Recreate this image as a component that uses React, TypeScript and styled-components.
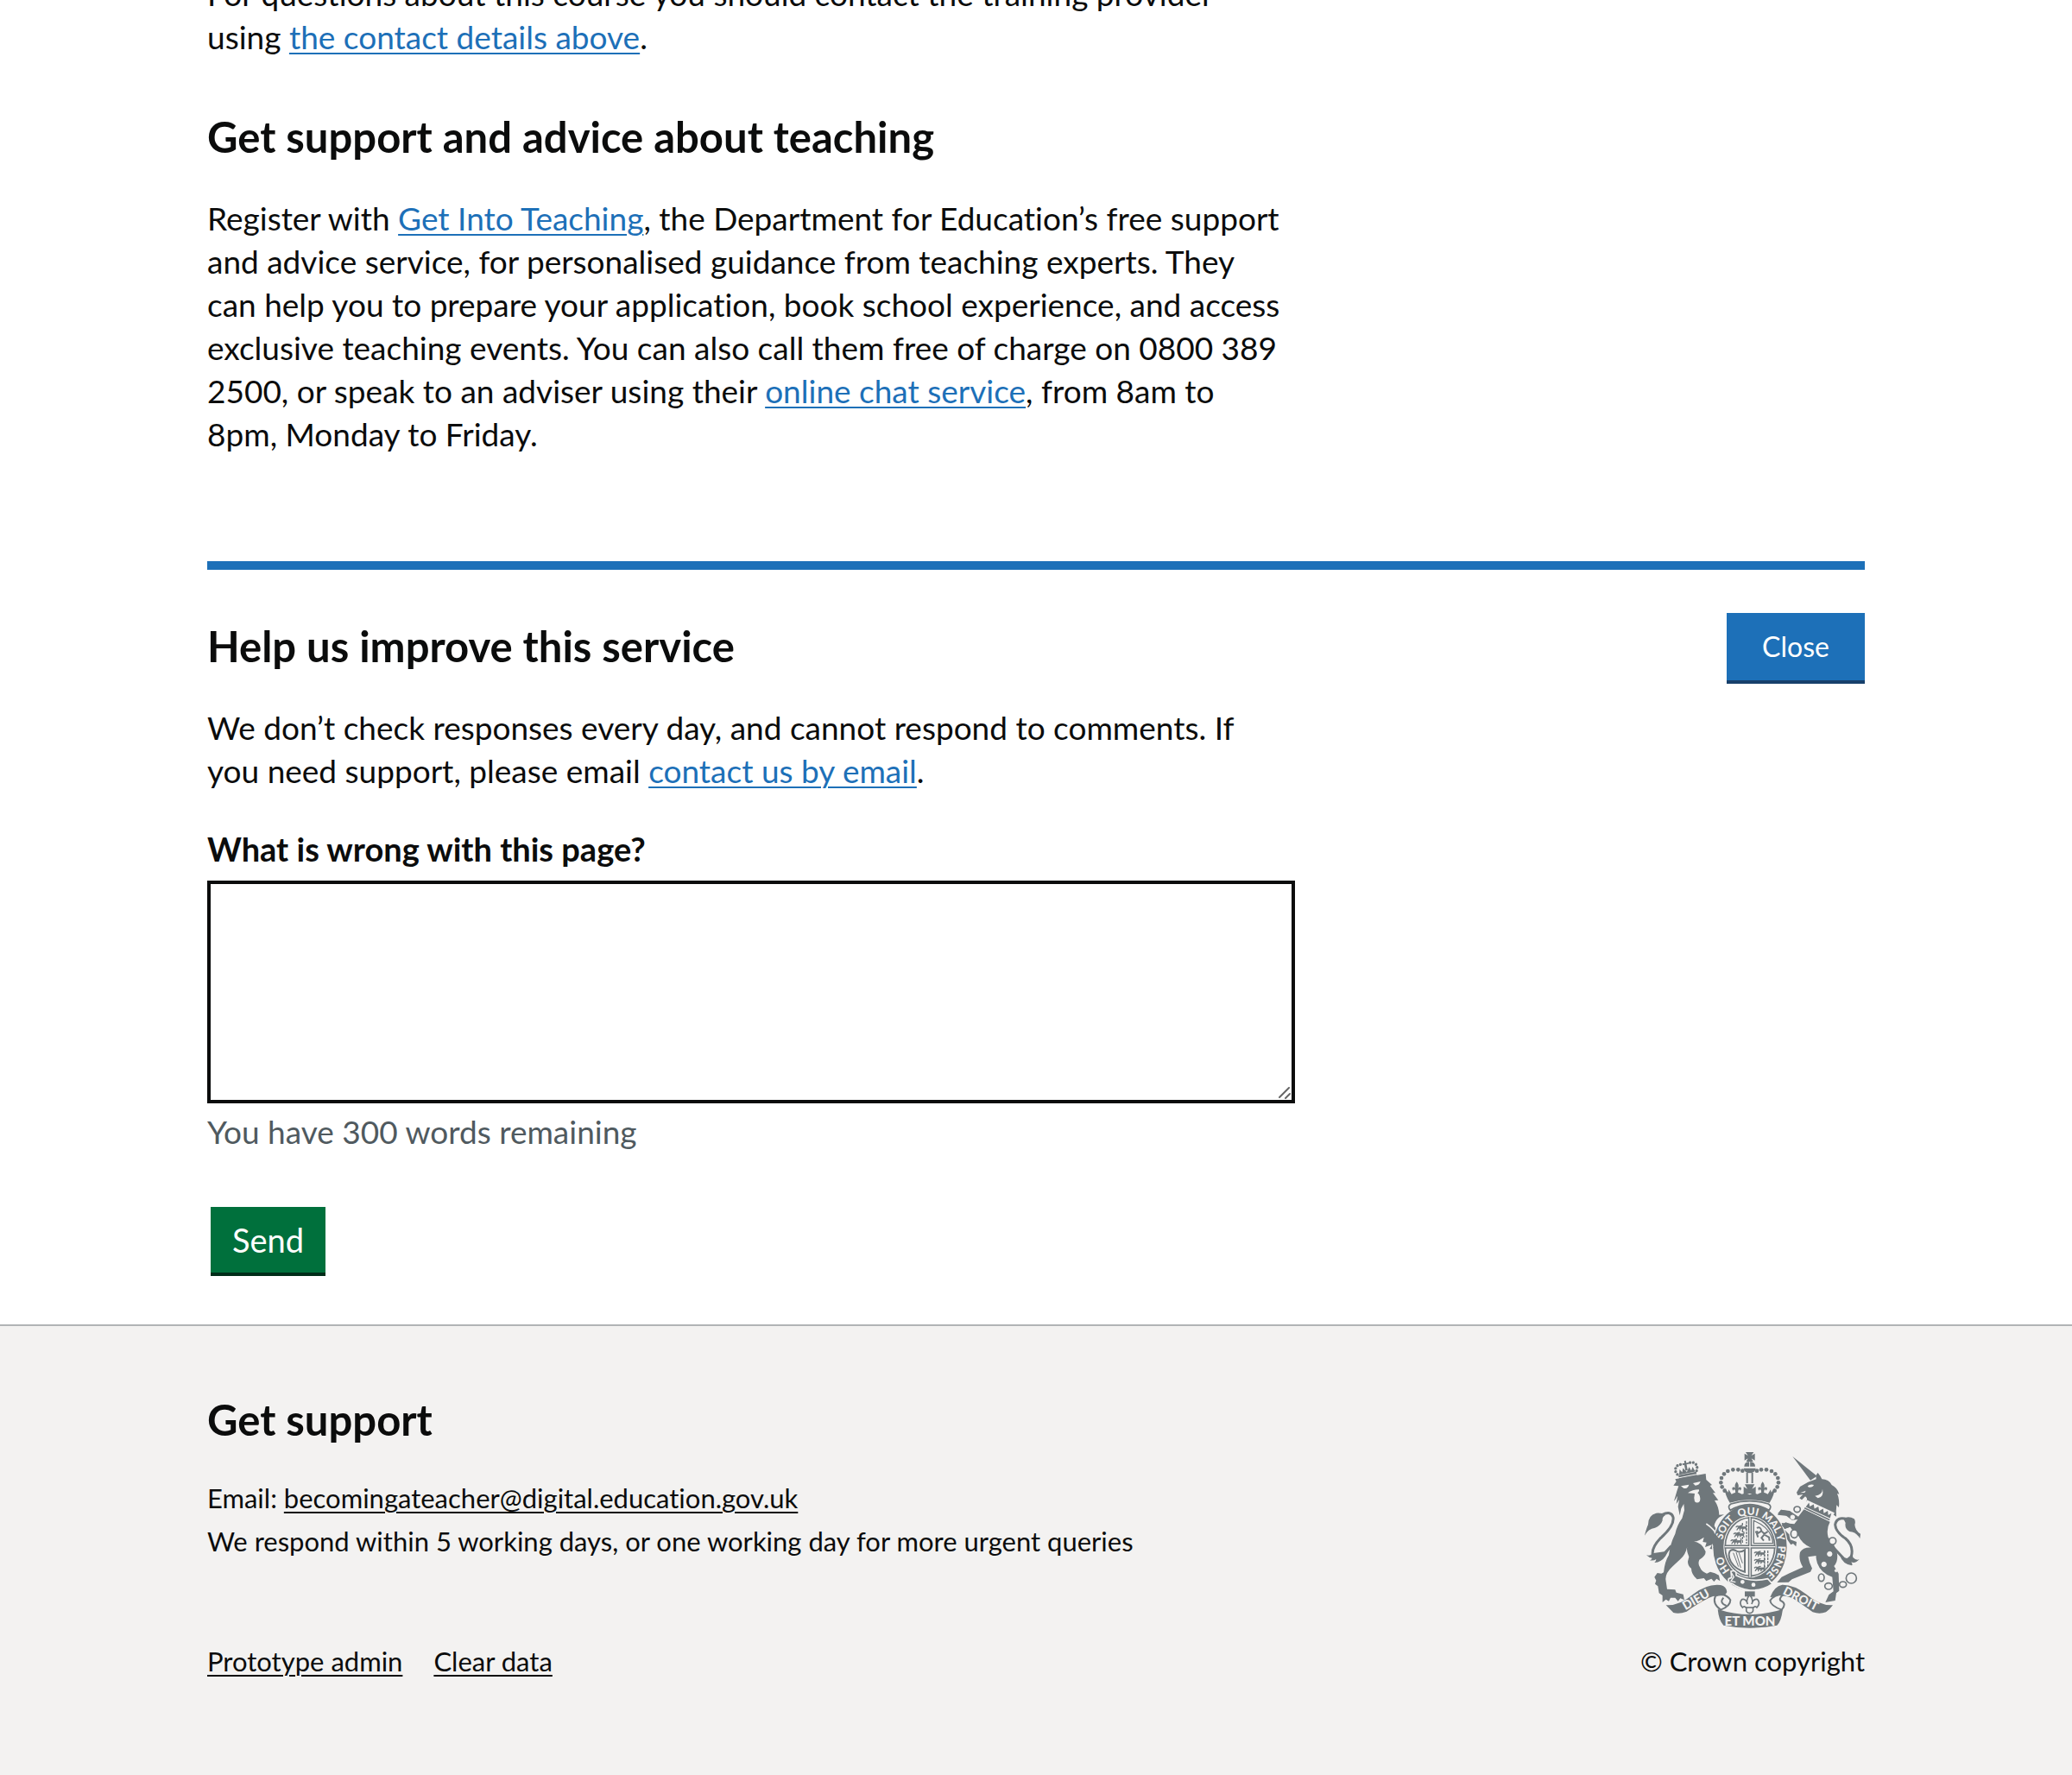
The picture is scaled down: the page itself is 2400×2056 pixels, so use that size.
import React from "react";
import styled, { createGlobalStyle } from "styled-components";

const ink = "#0b0c0c";
const blue = "#1d70b8";

const GlobalStyle = createGlobalStyle`
  *, *::before, *::after { box-sizing: border-box; }
  body {
    margin: 0;
    background: #ffffff;
    color: ${ink};
    font-family: Lato, "Liberation Sans", sans-serif;
    font-size: 37px;
    line-height: 50px;
    font-variant-ligatures: none;
  }
`;

const Page = styled.div`
  display: flex;
  flex-direction: column;
  min-height: 100vh;
  overflow: hidden;
`;

const Container = styled.div`
  width: 80%;
  margin: 0 auto;
`;

const Main = styled(Container).attrs({ as: "main" })`
  margin-top: -32px;
  padding-bottom: 56px;
`;

const Column = styled.div`
  max-width: 1260px;
`;

const Heading = styled.h2<{ $gap?: number }>`
  margin: 0 0 ${(p) => p.$gap ?? 40}px;
  font-size: 49px;
  line-height: 60px;
  font-weight: 700;
`;

const Paragraph = styled.p<{ $gap?: number }>`
  margin: 0 0 ${(p) => p.$gap ?? 40}px;
`;

const Link = styled.a<{ $muted?: boolean }>`
  color: ${(p) => (p.$muted ? ink : blue)};
  text-decoration: underline;
  text-decoration-thickness: 2px;
  text-underline-offset: 4px;
`;

const Feedback = styled.section`
  border-top: 10px solid ${blue};
  padding-top: 50px;
`;

const FeedbackHeader = styled.div`
  display: flex;
  justify-content: space-between;
  align-items: flex-start;
  margin-bottom: 26px;
`;

const FeedbackTitle = styled(Heading)`
  margin: 8px 0 0;
`;

const Button = styled.button<{ $tone: "blue" | "green" }>`
  display: block;
  border: 0;
  padding: 0 24px;
  height: ${(p) => (p.$tone === "blue" ? 78 : 76)}px;
  min-width: ${(p) => (p.$tone === "blue" ? 160 : 133)}px;
  margin: ${(p) => (p.$tone === "blue" ? "0 0 4px" : "0 4px 4px")};
  background: ${(p) => (p.$tone === "blue" ? blue : "#00703c")};
  box-shadow: 0 4px 0 ${(p) => (p.$tone === "blue" ? "#17406b" : "#002d18")};
  color: #ffffff;
  font: inherit;
  font-size: ${(p) => (p.$tone === "blue" ? 32 : 38)}px;
  cursor: pointer;
`;

const Form = styled.form`
  margin: 0;
`;

const Label = styled.label`
  display: block;
  margin-bottom: 12px;
  font-size: 38px;
  font-weight: 700;
`;

const TextArea = styled.textarea`
  display: block;
  width: 100%;
  height: 258px;
  margin: 0 0 8px;
  padding: 10px;
  border: 4px solid ${ink};
  border-radius: 0;
  background: #ffffff;
  color: ${ink};
  font: inherit;
  resize: vertical;

  &::-webkit-resizer {
    background: url("data:image/svg+xml,%3Csvg xmlns='http://www.w3.org/2000/svg' width='15' height='15'%3E%3Cpath d='M1 12 L12 1 M8 13 L13 8' stroke='%23666' stroke-width='2' stroke-linecap='round'/%3E%3C/svg%3E") no-repeat;
  }
`;

const Hint = styled.div`
  margin-bottom: 62px;
  color: #505a5f;
`;

const Footer = styled.footer`
  flex: 1;
  border-top: 2px solid #b1b4b6;
  background: #f3f2f1;
  padding: 78px 0 112px;
  font-size: 31px;
`;

const FooterRow = styled(Container)`
  display: flex;
  justify-content: space-between;
  align-items: flex-end;
`;

const FooterLinks = styled.nav`
  display: flex;
  gap: 36px;
  line-height: 40px;
`;

const Copyright = styled.a`
  display: flex;
  flex-direction: column;
  align-items: center;
  gap: 18px;
  color: ${ink};
  line-height: 40px;
  text-decoration: none;
`;

const CrestSvg = styled.svg`
  display: block;
  width: 250px;
  height: 204px;
`;

const G = "#6f777b";
const P = "#f3f2f1";

const crownDots = [
  [412, 131], [397, 127], [379, 127], [361, 132], [348, 142], [339, 156], [337, 172], [341, 187], [350, 200],
];

const PassantLion = ({ x, y }: { x: number; y: number }) => (
  <g transform={`translate(${x} ${y})`} fill="none" stroke={G} strokeWidth="4" strokeLinecap="round">
    <path d="M2 4 Q8 -2 12 5 L32 5 Q40 5 36 -3 M10 6 L5 14 M17 6 L15 15 M28 6 L24 14 M34 6 L37 15 M13 2 L22 -1" />
    <path d="M12 7 H34" strokeWidth="7" />
  </g>
);

const Fleur = ({ x, y }: { x: number; y: number }) => (
  <path
    transform={`translate(${x} ${y})`}
    fill={G}
    d="M0 -21 Q11 -8 4 3 Q7 -5 14 -2 Q19 4 11 10 Q12 4 6 7 Q4 12 5 20 H-5 Q-4 12 -6 7 Q-12 4 -11 10 Q-19 4 -14 -2 Q-7 -5 -4 3 Q-11 -8 0 -21Z"
  />
);

const Crest = () => (
  <CrestSvg viewBox="72 66 750 612" aria-hidden="true">
    {/* supporters: lion */}
    <g fill={G}>
      <path d="M72 356 Q78 330 84 318 Q84 285 112 278 Q132 276 144 285 Q132 292 134 304 Q128 322 108 329 Q84 332 72 356Z" />
      <path
        d="M132 284 Q164 268 171 292 Q176 322 126 366 Q96 398 100 422 Q112 440 136 424 L164 392"
        fill="none" stroke={G} strokeWidth="9"
      />
      <path d="M98 418 Q94 428 78 424 Q88 434 98 434 Q96 440 90 442 Q104 444 112 438 Q112 446 106 450 Q130 448 144 428 L162 396 L140 412Z" />
      <path d="M172 182 L182 168 L178 160 L284 141 L286 162 L306 180 L299 183 L318 208 L309 208 L328 233 L315 234 Q330 256 331 284 L348 283 L330 293 Q316 306 314 322 Q326 340 332 366 Q344 384 342 402 L350 414 L342 430 L334 416 L326 434 L318 420 L310 424 L314 404 L298 402 L306 388 L282 396 L287 380 L274 378 L278 362 L262 372 Q248 378 240 376 Q272 380 284 412 Q284 428 262 440 Q256 454 264 466 Q270 482 288 488 L300 482 L316 487 L330 494 L334 514 L322 506 L313 516 L304 506 L286 514 L278 504 L254 508 Q234 490 234 470 Q222 462 222 446 L226 430 Q216 408 220 394 Q214 424 196 438 L168 464 Q144 486 145 508 L150 542 L178 544 L182 554 L206 560 L210 580 L196 574 L188 584 L178 572 L162 572 L156 584 L146 578 L134 588 L134 564 L122 556 L118 532 L108 524 L112 512 L106 500 L116 486 L130 488 L138 484 Q142 446 156 424 Q160 386 178 350 Q184 320 202 296 L210 268 L208 246 L199 262 L194 286 L188 256 L192 232 L182 246 L186 218 L178 232 L174 236 L184 202 L190 184Z" />
      <g transform="rotate(-11 215 132)">
        <rect x="187" y="141" width="63" height="8" />
        <rect x="187" y="152" width="63" height="4" />
        {[184, 180, 182, 190, 201].map((x, i) => (
          <g key={x}>
            <circle cx={x} cy={[138, 127, 116, 108, 106][i]} r="5" />
            <circle cx={436 - x} cy={[138, 127, 116, 108, 106][i]} r="5" />
          </g>
        ))}
        <path d="M190 140 L195 122 L202 134 L207 120 L218 136 L229 120 L234 134 L241 122 L247 140Z" />
        <path d="M216 96 H222 V104 H230 V110 H222 V130 H214 V110 H208 V104 H216Z" />
      </g>
    </g>
    <g fill={P}>
      <path d="M198 184 L226 179 Q222 194 208 192Z M240 174 L266 168 Q262 182 248 182Z" />
      <path d="M222 208 Q238 196 260 196 Q264 200 256 208 Q268 218 264 236 Q256 246 246 238 Q242 224 246 210Z" />
    </g>
    <path d="M286 315 Q312 332 328 360" fill="none" stroke={P} strokeWidth="5" />

    {/* supporters: unicorn */}
    <g fill={G}>
      <path d="M586 81 L671 149 L648 164Z" />
      <path d="M600 206 L612 186 L640 170 L668 160 Q666 144 674 138 Q684 150 688 160 Q712 160 722 180 Q742 190 748 212 L741 210 Q750 232 747 258 L739 250 Q736 272 738 290 L720 278 L634 238 Q640 226 630 220 L618 232 L610 226 L622 213 L604 216Z" />
      <path d="M626 264 L716 308 Q702 334 710 362 Q732 384 740 414 Q746 444 730 462 L746 488 L748 548 L738 556 L734 582 L700 588 L712 562 L728 550 L724 500 Q684 486 672 452 Q666 432 668 426 L640 430 Q644 452 654 470 L648 482 L584 508 L572 518 L532 519 L548 500 L572 488 L622 466 Q606 440 612 414 Q624 396 650 398 Q618 384 606 356 Q584 338 578 326 L556 334 L574 352 L578 370 L600 378 L598 394 L588 384 L580 388 L562 362 L544 330 L548 312 L592 316 L604 300 L584 302 L560 284 L534 280 L546 266 L576 270 L606 290Z" />
      <path d="M762 296 Q782 286 800 298 Q806 306 802 318 Q804 340 822 350 L820 366 Q806 342 784 342 Q766 332 770 312Z" />
      <path
        d="M776 300 Q740 288 734 318 Q736 344 770 366 Q800 392 790 428 Q784 446 764 436 L730 400"
        fill="none" stroke={G} strokeWidth="9"
      />
      <path d="M794 420 L796 432 Q808 444 818 438 Q804 454 790 448 Q796 458 792 460 Q760 456 750 424 L772 438Z" />
    </g>
    <path d="M638 184 Q648 176 660 180 Q656 190 642 188Z M664 218 Q690 214 690 194 Q696 222 674 226Z M612 208 L632 200 L628 207Z" fill={P} />
    <g transform="rotate(25 674 275)">
      <rect x="622" y="252" width="105" height="34" fill={P} />
      <path d="M626 279 H722 V284 H626Z M628 276 L632 258 L640 269 L649 256 L658 269 L667 256 L676 269 L685 256 L694 269 L703 256 L711 269 L718 258 L721 276Z" fill={G} />
    </g>
    <g fill={P} stroke={P} strokeWidth="3">
      <circle cx="586" cy="292" r="7" />
      <circle cx="715" cy="420" r="8" />
      <circle cx="695" cy="456" r="8" />
      <circle cx="737" cy="478" r="4" />
    </g>
    <g fill={P} stroke={G} strokeWidth="5">
      <ellipse cx="602" cy="265" rx="11" ry="10" />
      <ellipse cx="592" cy="350" rx="12" ry="14" />
      <ellipse cx="725" cy="375" rx="12" ry="12" />
      <ellipse cx="686" cy="502" rx="10" ry="13" />
      <ellipse cx="711" cy="532" rx="13" ry="11" />
      <ellipse cx="761" cy="526" rx="12" ry="10" />
      <circle cx="790" cy="504" r="18" />
    </g>

    {/* garter and shield */}
    <ellipse cx="438" cy="397" rx="132" ry="151" fill={P} />
    <ellipse cx="438" cy="397" rx="128" ry="148" fill={G} />
    <ellipse cx="438" cy="395" rx="92" ry="107" fill={P} />
    <ellipse cx="438" cy="395" rx="86" ry="101" fill="none" stroke={G} strokeWidth="5" />
    <path d="M438 292 V500 M350 395 H526" stroke={G} strokeWidth="13" />
    <path d="M438 292 V500 M350 395 H526" stroke={P} strokeWidth="4" />
    <PassantLion x={388} y={322} />
    <PassantLion x={380} y={346} />
    <PassantLion x={370} y={370} />
    <PassantLion x={452} y={412} />
    <PassantLion x={452} y={438} />
    <PassantLion x={452} y={464} />
    <path d="M412 312 V384 M426 306 V384 M500 408 V464 M488 408 V478" stroke={G} strokeWidth="4" strokeDasharray="9 3" />
    <g fill="none" stroke={G} strokeWidth="4">
      <path d="M451 304 V383 H518 Q514 330 451 304Z" />
      <path d="M368 410 Q360 424 372 448 Q388 474 420 482 V406 Q402 418 388 408 Q376 402 368 410Z" strokeWidth="6" />
      <path d="M380 416 L398 464 M390 414 L406 468 M400 416 L412 452" strokeWidth="3" />
      <path d="M462 330 Q474 322 478 340 L488 350 L500 342 M478 340 L462 350 L466 362 M488 352 L478 364 L486 374 M490 354 L504 362 L506 374 M466 342 L456 344" strokeWidth="6" />
    </g>
    <defs>
      <path id="motto" d="M340 397 A98 113 0 0 1 438 284 A98 113 0 0 1 536 397 A98 113 0 0 1 438 510 A98 113 0 0 1 340 397" />
    </defs>
    <g fill={P} fontFamily="Lato, sans-serif" fontWeight="900" fontSize="36">
      <text><textPath href="#motto" startOffset="26">SOIT</textPath></text>
      <text><textPath href="#motto" startOffset="126">QUI</textPath></text>
      <text><textPath href="#motto" startOffset="205">MAL</textPath></text>
      <text><textPath href="#motto" startOffset="287">Y</textPath></text>
      <text><textPath href="#motto" startOffset="326">PENSE</textPath></text>
      <text><textPath href="#motto" startOffset="576">HO</textPath></text>
    </g>
    <path d="M372 480 Q392 474 390 494 Q440 520 500 506 L516 524 Q480 548 438 546 Q396 540 378 524 Q360 520 364 506 L374 502Z" fill={G} stroke={P} strokeWidth="5" />
    <path d="M374 486 L382 500 L372 514 L388 518" fill="none" stroke={P} strokeWidth="4" />
    <circle cx="412" cy="517" r="7" fill={P} />
    <circle cx="450" cy="527" r="7" fill={P} />
    {/* lion's forepaw laid over the garter */}
    <path d="M300 340 Q328 352 334 378 L344 404 L346 420 L338 412 L332 426 L324 416 L313 420 L318 402 L304 380Z" fill={G} />
    <path d="M548 320 L562 310 L592 320 L560 332Z M534 284 L546 266 L578 272 L570 288Z" fill={G} />

    {/* crown */}
    <path d="M372 246 Q437 226 502 246 Q516 254 504 268 Q437 228 370 268 Q358 254 372 246Z" fill={P} stroke={G} strokeWidth="5" />
    <g fill={G}>
      <path d="M423 66 H451 L443 78 L455 71 V95 L443 88 L449 99 H425 L431 88 L419 95 V71 L431 78Z" />
      <path d="M418 116 Q418 100 437 99 Q456 100 456 116Z" />
      <path d="M416 122 H458 Q456 138 437 139 Q418 138 416 122Z" />
      <path d="M425 138 H431 V174 H425Z M443 138 H449 V174 H443Z" />
      {crownDots.map(([x, y]) => (
        <g key={y + x}>
          <circle cx={x} cy={y} r="7" />
          <circle cx={874 - x} cy={y} r="7" />
        </g>
      ))}
      <path d="M349 190 L362 206 L364 196 L374 212 Q392 200 410 212 L424 208 L437 214 L450 208 L464 212 Q482 200 500 212 L510 196 L512 206 L525 190 Q522 218 506 242 Q437 222 368 242 Q352 218 349 190Z" />
      <path d="M420 178 H454 L445 194 L458 186 V210 H416 V186 L429 194Z" />
    </g>
    <Fleur x={392} y={190} />
    <Fleur x={482} y={190} />
    <path d="M437 99 V117" stroke={P} strokeWidth="3" />

    {/* ribbon */}
    <path d="M420 550 H455 V568 H420Z" fill={G} />
    <g fill={P} stroke={G} strokeWidth="5">
      <path d="M437 562 Q452 578 444 594 Q450 574 464 578 Q476 590 462 606 Q456 598 448 608 Q452 624 437 626 Q422 624 426 608 Q418 598 412 606 Q398 590 410 578 Q424 574 430 594 Q422 578 437 562Z" />
      <path d="M422 606 H452" />
    </g>
    <g fill={G}>
      <path d="M146 598 Q194 600 240 560 Q290 522 336 528 Q356 532 358 552 Q352 566 338 568 Q318 562 296 572 Q252 594 218 620 Q192 630 172 624 Q160 612 146 598Z" />
      <path d="M726 598 Q680 600 634 560 Q590 526 550 527 Q522 532 508 570 L538 568 Q560 560 590 576 Q632 604 656 622 Q680 630 702 622 Q716 612 726 598Z" />
      <path d="M326 612 Q437 648 552 612 Q546 656 532 668 Q437 686 346 668 Q330 652 326 612Z" />
    </g>
    <g fill={P} stroke={G} strokeWidth="6">
      <path d="M318 566 Q352 552 370 580 Q370 602 336 614 Q306 592 318 566Z" />
      <path d="M554 560 Q522 560 508 582 Q510 600 548 614 Q566 594 548 584 Q534 578 554 560Z" />
      <path d="M346 572 Q330 590 356 600" fill="none" />
    </g>
    <g fill={P} fontFamily="Lato, sans-serif" fontWeight="900" fontSize="42">
      <text transform="translate(214 616) rotate(-30)">DIEU</text>
      <text transform="translate(550 558) rotate(27)">DROIT</text>
      <text x="438" y="669" textAnchor="middle" fontSize="45">ET MON</text>
    </g>
  </CrestSvg>
);

export default function App() {
  return (
    <>
      <GlobalStyle />
      <Page>
        <Main>
          <Column>
            <Paragraph $gap={60}>
              For questions about this course you should contact the training provider using{"\u00a0"}
              <Link href="#contact">the contact details above</Link>.
            </Paragraph>
            <Heading>Get support and advice about teaching</Heading>
            <Paragraph $gap={122}>
              Register with <Link href="#git">Get Into Teaching</Link>, the Department for Education’s free
              support and advice service, for personalised guidance from teaching experts. They can&nbsp;help
              you to prepare your application, book school experience, and access exclusive teaching events.
              You can also call them free of charge on 0800 389 2500, or speak to an adviser using their{" "}
              <Link href="#chat">online chat service</Link>, from 8am to 8pm,&nbsp;Monday to Friday.
            </Paragraph>
          </Column>
          <Feedback>
            <FeedbackHeader>
              <FeedbackTitle>Help us improve this service</FeedbackTitle>
              <Button type="button" $tone="blue">Close</Button>
            </FeedbackHeader>
            <Column>
              <Paragraph>
                We don’t check responses every day, and cannot respond to comments. If you&nbsp;need support,
                please email <Link href="#email">contact us by email</Link>.
              </Paragraph>
              <Form onSubmit={(e) => e.preventDefault()}>
                <Label htmlFor="wrong">What is wrong with this page?</Label>
                <TextArea id="wrong" aria-describedby="wrong-hint" />
                <Hint id="wrong-hint">You have 300 words remaining</Hint>
                <Button type="submit" $tone="green">Send</Button>
              </Form>
            </Column>
          </Feedback>
        </Main>
        <Footer>
          <FooterRow>
            <div>
              <Heading $gap={36}>Get support</Heading>
              <Paragraph $gap={94}>
                Email: <Link $muted href="#mail">becomingateacher@digital.education.gov.uk</Link>
                <br />
                We respond within 5 working days, or one working day for more urgent queries
              </Paragraph>
              <FooterLinks>
                <Link $muted href="#admin">Prototype admin</Link>
                <Link $muted href="#clear">Clear data</Link>
              </FooterLinks>
            </div>
            <Copyright href="#copyright">
              <Crest />
              <span>© Crown copyright</span>
            </Copyright>
          </FooterRow>
        </Footer>
      </Page>
    </>
  );
}
